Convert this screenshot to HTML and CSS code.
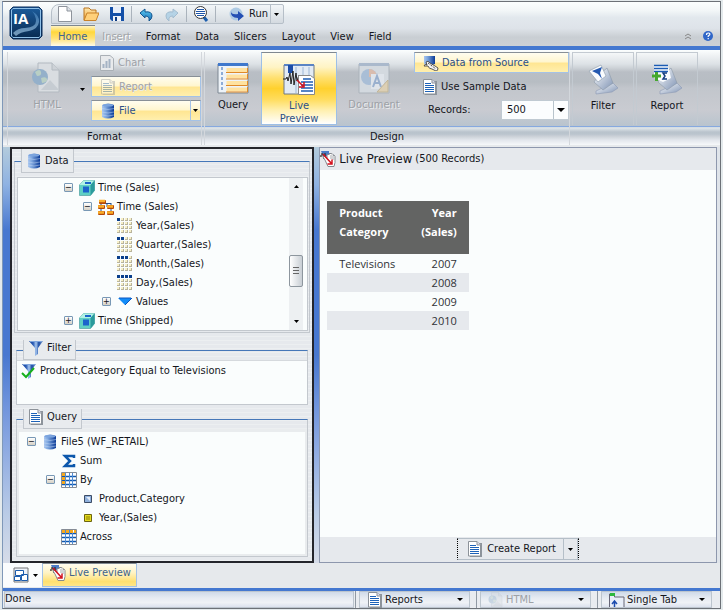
FILE: index.html
```html
<!DOCTYPE html>
<html lang="en">
<head>
    <meta charset="UTF-8">
    <meta name="viewport" content="width=device-width, initial-scale=1.0">
    <title>InfoAssist</title>
    <link rel="stylesheet" href="styles.css">
</head>
<body>
    <!-- Shared icons -->
    <svg class="sprite" aria-hidden="true">
        <defs>
            <linearGradient id="gDb"><stop offset="0" stop-color="#a9c6ee"/><stop offset=".3" stop-color="#7fa8e0"/><stop offset="1" stop-color="#0a3a96"/></linearGradient>
            <linearGradient id="gFunnel"><stop offset="0" stop-color="#12409c"/><stop offset=".3" stop-color="#2a5cb4"/><stop offset=".5" stop-color="#a8c8f0"/><stop offset=".7" stop-color="#1c4ca4"/><stop offset="1" stop-color="#7a9ccc"/></linearGradient>
            <linearGradient id="gLogo" x2="0" y2="1"><stop offset="0" stop-color="#1c5c9c"/><stop offset="1" stop-color="#08294f"/></linearGradient>
            <linearGradient id="gWave" x2="0" y2="1"><stop offset="0" stop-color="#3c7cb8"/><stop offset="1" stop-color="#9cc0dc"/></linearGradient>
            <linearGradient id="gWand" x2="1" y2="1"><stop offset="0" stop-color="#fdfefe"/><stop offset="1" stop-color="#7f93b4"/></linearGradient>
            <linearGradient id="gFolder" x2="0" y2="1"><stop offset="0" stop-color="#ffe9b0"/><stop offset="1" stop-color="#f0a030"/></linearGradient>
            <linearGradient id="gArrow" x2="0" y2="1"><stop offset="0" stop-color="#5fd0f4"/><stop offset="1" stop-color="#1769b4"/></linearGradient>
        </defs>
        <symbol id="db" viewBox="0 0 16 16">
            <path d="M2 2q6-3 12 0v12q-6 3-12 0z" fill="url(#gDb)"/>
            <path d="M2 5.500q6 2 12 0M2 9q6 2 12 0M2 12q6 2 12 0" fill="none" stroke="#c5d8f4" stroke-width=".5"/>
            <ellipse cx="8" cy="2.300" rx="5.500" ry="1.200" fill="#7ba4de"/>
        </symbol>
        <symbol id="doc" viewBox="0 0 16 16">
            <path d="M3 2h12v14H3z" fill="#8d949c"/>
            <path d="M1.500.5h8.500l3.500 3.500v11h-12z" fill="#fff" stroke="#8c9299"/>
            <path d="M10 .5V4h3.500" fill="#dde" stroke="#8c9299"/>
            <path d="M3 4.500h6M3 6.500h9M3 8.500h9M3 10.500h9M3 12.500h9" stroke="#1d62b8"/>
        </symbol>
        <symbol id="cube" viewBox="0 0 16 16">
            <path d="M.5 5l4-4.500h11v10l-4 5H.5z" fill="#5fd0c4" stroke="#5aa8a8" stroke-width=".8"/>
            <path d="M.5 5l4-4.500h11l-4 4.500z" fill="#b0f2e4"/>
            <path d="M11.500 5l4-4.500v10l-4 5z" fill="#2a9a9c"/>
            <path d="M4 6.500h6v6H4z" fill="#1b64cc"/><path d="M6 3h6" stroke="#1b64cc" stroke-width="2"/>
        </symbol>
        <symbol id="hier" viewBox="0 0 16 16">
            <path d="M5 4.500h8M9 4v4M13 4v9M3 4v10" fill="none" stroke="#27508c"/>
            <g fill="#b5480a"><rect x="1" y="1" width="7" height="4" rx="1"/><rect x="0" y="6" width="7" height="4" rx="1"/><rect x="9" y="6" width="7" height="4" rx="1"/><rect x="0" y="12" width="7" height="4" rx="1"/><rect x="9" y="12" width="7" height="4" rx="1"/></g>
            <path d="M1 2h6M0 7.500h6M9 7.500h6M0 13.500h6M9 13.500h6" stroke="#fbb02a" stroke-width="2.500"/>
        </symbol>
        <symbol id="dots" viewBox="0 0 16 16">
            <path d="M0 1.500h16M0 5.500h16M0 9.500h16M0 13.500h16" stroke="#b9b49c" stroke-width="3" stroke-dasharray="3 1"/>
            <path d="M0 1h16M0 5h16M0 9h16M0 13h16" stroke="#f7f0c8" stroke-width="2" stroke-dasharray="2 2"/>
        </symbol>
        <symbol id="down" viewBox="0 0 16 16"><path d="M1 4h14l-7 7z" fill="#128cf8"/><path d="M2 4h12M15 4l-7 7" stroke="#0b57c0" fill="none"/></symbol>
        <symbol id="funnel" viewBox="0 0 16 16">
            <path d="M1 1h14l-5 7v6l-3 2V8z" fill="url(#gFunnel)"/><path d="M2 1.500h12" stroke="#7fa5dc"/>
        </symbol>
        <symbol id="sigma" viewBox="0 0 16 16"><path d="M13 5V3H4l5 5-5 5h9v-2" fill="none" stroke="#0d58ac" stroke-width="2.500"/></symbol>
        <symbol id="grid" viewBox="0 0 16 16">
            <path d="M.5.5h15v15H.5z" fill="#fff" stroke="#858c96"/>
            <path d="M1 4.500h14M1 8.500h14M1 12.500h14" stroke="#0d57b0" stroke-width="1.500"/><path d="M4.500 1v14M8.500 1v14M11.500 1v14" stroke="#4f8cd4"/>
        </symbol>
        <symbol id="hand" viewBox="0 0 16 16">
            <path d="M1 0h8v5H3z" fill="#4b7cc8"/><path d="M0 4l1 2 1-4 2 6 1-6 1 5" fill="none" stroke="#333" stroke-width=".8"/>
            <path d="M5 9L3 6l1-1 3 2V4l1-1 1 1V3l1-1 1 1 1-.5 1 1v1l1-.5 1 1.500v6l-1 4H8z" fill="#fff" stroke="#84898f"/>
            <path d="M11 4v4M13 5v4" stroke="#8d9298" stroke-width=".8"/>
            <path d="M3 3l8.500 9.500M12 8.500V13H7.500" stroke="#d3121f" stroke-width="1.500" fill="none"/>
        </symbol>
        <symbol id="globe" viewBox="0 0 32 32">
            <path d="M7 1h14l7 7v22H7z" fill="#d9dde1" stroke="#b3bac1"/><path d="M21 1v7h7" fill="#cdd2d7" stroke="#b3bac1"/>
            <path d="M10 28l9-10 9 10z" fill="#c6ccd2"/>
            <circle cx="9" cy="15" r="8" fill="#94b0ca"/><path d="M4 10q5-4 6 0t-4 4zM10 16q5-2 6 1t-5 4z" fill="#b9cfc4"/>
        </symbol>
        <symbol id="caret" viewBox="0 0 5 3"><path d="M0 0h5L2.500 3z" fill="currentColor"/></symbol>
    </svg>

    <div class="app">
        <header class="top">
            <svg class="logo" viewBox="0 0 34 34" role="img" aria-label="InfoAssist">
                <path d="M4 1h26l3 3v26l-3 3H4l-3-3V4z" fill="url(#gLogo)" stroke="#0b2f5c"/>
                <path d="M4 2.500h26l1.500 1.500v26L30 31.500H4L2.500 30V4z" fill="none" stroke="#8fc0e8"/>
                <path d="M23 5q8 5 7 11-1 7-10 9-9 1-13 5l-3-3q5-5 12-5 11-1 11-7 0-5-4-10z" fill="url(#gWave)" opacity=".75"/>
                <text x="4" y="18" class="logo-text">IA</text>
            </svg>
            <div class="top-main">
                <div class="quick">
                    <button aria-label="New"><svg viewBox="0 0 16 16"><path d="M1.500.5H10L14.500 5v10.500h-13z" fill="#fff" stroke="#8d939b"/><path d="M10 .5V5h4.500" fill="#dde3ea" stroke="#8d939b"/></svg></button>
                    <button aria-label="Open"><svg viewBox="0 0 16 16"><path d="M1 14V2h5l2 2h5v3" fill="url(#gFolder)" stroke="#b87420"/><path d="M1 14.500L4 7h12l-3 7.500z" fill="#ffd07a" stroke="#c8822a"/></svg></button>
                    <button aria-label="Save"><svg viewBox="0 0 16 16"><path d="M1 1h14v14H3l-2-2z" fill="#1450a8"/><path d="M4 1h8v6H4z" fill="#e6eefa"/><path d="M4 10h8v5H4z" fill="#f0f4fa"/><path d="M6 11h2v4H6z" fill="#103c80"/></svg></button>
                    <span class="sep"></span>
                    <button aria-label="Undo"><svg viewBox="0 0 16 16"><path d="M2 7l5-4v3q7-1 7 4 0 3-3 5 1-5-4-5v2z" fill="url(#gArrow)" stroke="#12558f"/></svg></button>
                    <button aria-label="Redo" disabled><svg viewBox="0 0 16 16"><path d="M14 7L9 3v3q-7-1-7 4 0 3 3 5-1-5 4-5v2z" fill="#b5d3e6" stroke="#a3bccf"/></svg></button>
                    <span class="sep"></span>
                    <button aria-label="View query"><svg viewBox="0 0 16 16"><path d="M10 10l4 5" stroke="#1c5fae" stroke-width="3"/><circle cx="7.500" cy="6.500" r="6" fill="#fff" stroke="#333"/><path d="M4 3.500h7M3 5.500h9M3 7.500h9M4 9.500h7" stroke="#1d55a8"/></svg></button>
                    <span class="sep"></span>
                    <button class="run"><svg viewBox="0 0 16 16"><circle cx="7" cy="8" r="6.500" fill="#aecbe4"/><path d="M2 5q0 4 7 3V5l6 5-6 5v-3q-8 0-7-7z" fill="#2450b4"/></svg>Run</button>
                    <button class="split" aria-label="Run options"><svg class="caret"><use href="#caret"/></svg></button>
                </div>
                <nav class="menu">
                    <a href="#" class="active">Home</a>
                    <a href="#" class="off">Insert</a>
                    <a href="#">Format</a>
                    <a href="#">Data</a>
                    <a href="#">Slicers</a>
                    <a href="#">Layout</a>
                    <a href="#">View</a>
                    <a href="#">Field</a>
                </nav>
            </div>
            <div class="help">
                <button aria-label="Collapse ribbon"><svg viewBox="0 0 10 10"><path d="M2 5l3-2 3 2M2 8l3-2 3 2" fill="none" stroke="#888"/></svg></button>
                <button aria-label="Help"><svg viewBox="0 0 10 10"><circle cx="5" cy="5" r="5" fill="#2f66c8"/><path d="M3.500 4q0-2 1.800-2t1.500 1.700L5.200 5v1M5.200 7v1.300" fill="none" stroke="#fff" stroke-width="1.200"/></svg></button>
            </div>
        </header>

        <div class="ribbon">
            <section class="group format">
                <div class="group-body">
                    <button class="big wide" disabled><svg><use href="#globe"/></svg>HTML</button>
                    <button class="drop" aria-label="Output format"><svg class="caret"><use href="#caret"/></svg></button>
                    <div class="stack">
                        <button class="item" disabled><svg viewBox="0 0 16 16"><path d="M1.500.5H11l3.500 3v12h-13z" fill="#e8eaec" stroke="#aab0b6"/><path d="M4.500 13V9M7.500 13V6M10.500 13V4" stroke="#a5b3c4" stroke-width="2"/></svg>Chart</button>
                        <button class="item lit" disabled><svg class="faded"><use href="#doc"/></svg>Report</button>
                        <div class="pair">
                            <button class="item lit"><svg><use href="#db"/></svg>File</button>
                            <button class="lit" aria-label="File options"><svg class="caret"><use href="#caret"/></svg></button>
                        </div>
                    </div>
                </div>
                <h2>Format</h2>
            </section>
            <section class="group design">
                <div class="group-body">
                    <button class="big"><svg viewBox="0 0 32 32"><path d="M1 2h30v29H1z" fill="#eef3f8" stroke="#7d8792"/><path d="M1 1h30v3H1z" fill="#3f78cc"/><path d="M5 5v25" stroke="#2d66b8" stroke-dasharray="3 2"/><path d="M9.500 6h21v4h-21zM9.500 12.500h21v4h-21zM9.500 19h21v4h-21zM9.500 25.500h21v4h-21z" fill="#ffe2a0"/><path d="M9 10.500h21.500V6M9 17h21.500v-5M9 23.500h21.500V19M9 30h21.500v-5" fill="none" stroke="#e08a28"/></svg>Query</button>
                    <button class="big live"><svg viewBox="0 0 32 32"><path d="M1 2h30v29H1z" fill="#e3ebf4" stroke="#6e7883"/><path d="M1 1h30v2H1z" fill="#5a84c4"/><path d="M5 2h5v8H5z" fill="#1d4ea8"/><path d="M13 4v26M20 4v26M26 4v26" stroke="#9db7d8"/><path d="M0 16h3l1-2 1 4 2-8 1 11 2-13 1 14 2-12 1 8 2-6 1 4" fill="none" stroke="#222"/><path d="M15.500 12.500h12l4 3v16h-16z" fill="#fff" stroke="#888"/><path d="M20 16h8M18 19h12M18 22h12M18 25h12M18 28h12" stroke="#1c5cb4" stroke-width="1.500"/><path d="M14 17l6 6M21 19v5h-5" stroke="#d0101c" stroke-width="1.500" fill="none"/></svg>Live<br>Preview</button>
                    <button class="big wide" disabled><svg viewBox="0 0 32 32"><path d="M1 2h30v29H1z" fill="#d3d9df" stroke="#abb3bb"/><path d="M1 1h30v3H1z" fill="#aab9cc"/><circle cx="11" cy="15" r="8" fill="#a9bed6"/><path d="M11 15V7a8 8 0 0 1 8 8z" fill="#d9bcae"/><path d="M13 27V12h13v15z" fill="#dfe4ea"/><path d="M15 25l4-11 4 11M17 21h5" fill="none" stroke="#9ab0ce" stroke-width="2"/><path d="M19 30L30 18v12z" fill="#dccfb4" stroke="#c0b498"/></svg>Document</button>
                    <div class="stack source">
                        <button class="item lit"><svg viewBox="0 0 16 16"><path d="M1 1h11v8q-5 2-11 0z" fill="url(#gDb)"/><path d="M1 11q1-3 3-1l-1-3q2-2 4 1l5 3 3 2q0 3-2 3l-4-2q-3 0-4-3z" fill="#f4f4f4" stroke="#333" stroke-width=".8"/><path d="M5 8l8 6" stroke="#222" stroke-dasharray="1 1"/></svg>Data from Source</button>
                        <button class="item"><svg><use href="#doc"/></svg>Use Sample Data</button>
                        <div class="records">
                            <label for="records">Records:</label>
                            <span class="combo"><select id="records"><option>500</option><option>1000</option></select></span>
                        </div>
                    </div>
                </div>
                <h2>Design</h2>
            </section>
            <section class="group single">
                <button class="big"><svg viewBox="0 0 32 32"><path d="M9 28l17-8 5 5-6 4-16 2z" fill="url(#gWand)" stroke="#8b99b3" stroke-width=".6"/><path d="M12 12l8-7 6 15-10 7-9-8z" fill="url(#gWand)" stroke="#8b99a8" stroke-width=".6"/><path d="M2 8l12-6 5 11-8 6z" fill="#fafcfe" stroke="#8a98a8" stroke-width=".6"/><path d="M5 8l10-4-2 6 2 6-4-5z" fill="#2458b0"/></svg>Filter</button>
            </section>
            <section class="group single">
                <button class="big"><svg viewBox="0 0 32 32"><path d="M9 28l17-8 5 5-6 4-16 2z" fill="url(#gWand)" stroke="#8b99b3" stroke-width=".6"/><path d="M12 12l8-7 6 15-10 7-9-8z" fill="url(#gWand)" stroke="#8b99a8" stroke-width=".6"/><path d="M3 2h14l3 13-8 4-9-4z" fill="#fafcfe"/><path d="M3 2.500h14M3 5.500h14M3 8.500h14" stroke="#1c5cb4" stroke-width="1.500"/><path d="M1 13h9M5.500 9v9" stroke="#46a82e" stroke-width="3"/><path d="M16 10h-4l2 3-2 3h4" fill="none" stroke="#123c80" stroke-width="1.500"/></svg>Report</button>
            </section>
        </div>

        <main class="workspace">
            <div class="side">
                <fieldset class="pane data-pane">
                    <legend><svg><use href="#db"/></svg>Data</legend>
                    <div class="tree-box">
                        <ul class="tree data-tree">
                            <li><div class="row"><button class="toggle" aria-label="Collapse">−</button><svg><use href="#cube"/></svg>Time (Sales)</div>
                                <ul>
                                    <li><div class="row"><button class="toggle" aria-label="Collapse">−</button><svg><use href="#hier"/></svg>Time (Sales)</div>
                                        <ul>
                                            <li><div class="row leaf"><svg viewBox="0 0 16 16"><use href="#dots"/><path d="M0 1.500h3" stroke="#0a3f8c" stroke-width="3"/></svg>Year,(Sales)</div></li>
                                            <li><div class="row leaf"><svg viewBox="0 0 16 16"><use href="#dots"/><path d="M0 1.500h7" stroke="#0a3f8c" stroke-width="3" stroke-dasharray="3 1"/></svg>Quarter,(Sales)</div></li>
                                            <li><div class="row leaf"><svg viewBox="0 0 16 16"><use href="#dots"/><path d="M0 1.500h11" stroke="#0a3f8c" stroke-width="3" stroke-dasharray="3 1"/></svg>Month,(Sales)</div></li>
                                            <li><div class="row leaf"><svg viewBox="0 0 16 16"><use href="#dots"/><path d="M0 1.500h15" stroke="#0a3f8c" stroke-width="3" stroke-dasharray="3 1"/></svg>Day,(Sales)</div></li>
                                            <li><div class="row"><button class="toggle" aria-label="Expand">+</button><svg><use href="#down"/></svg>Values</div></li>
                                        </ul>
                                    </li>
                                </ul>
                            </li>
                            <li><div class="row"><button class="toggle" aria-label="Expand">+</button><svg><use href="#cube"/></svg>Time (Shipped)</div></li>
                        </ul>
                        <div class="scrollbar">
                            <svg class="caret flip"><use href="#caret"/></svg>
                            <span class="thumb"></span>
                            <svg class="caret"><use href="#caret"/></svg>
                        </div>
                    </div>
                </fieldset>

                <fieldset class="pane filter-pane">
                    <legend><svg><use href="#funnel"/></svg>Filter</legend>
                    <div class="filter-box">
                        <div class="filter-row"><svg viewBox="0 0 16 16"><use href="#funnel"/><path d="M1 10l4 4 8-9" fill="none" stroke="#16b01c" stroke-width="2"/></svg>Product,Category Equal to Televisions</div>
                    </div>
                </fieldset>

                <fieldset class="pane query-pane">
                    <legend><svg><use href="#doc"/></svg>Query</legend>
                    <div class="query-box">
                        <ul class="tree">
                            <li><div class="row"><button class="toggle" aria-label="Collapse">−</button><svg><use href="#db"/></svg>File5 (WF_RETAIL)</div>
                                <ul>
                                    <li><div class="row leaf"><svg><use href="#sigma"/></svg>Sum</div></li>
                                    <li><div class="row"><button class="toggle" aria-label="Collapse">−</button><svg viewBox="0 0 16 16"><use href="#grid"/><path d="M1 2.500h3M1 6.500h3M1 10.500h3" stroke="#f7a81c" stroke-width="3"/></svg>By</div>
                                        <ul>
                                            <li><div class="row leaf"><svg viewBox="0 0 16 16"><path d="M4.500 4.500h7v7h-7z" fill="#8fb0dc" stroke="#3c4c66"/><path d="M6 6h4v4z" fill="#e2ecfa"/></svg>Product,Category</div></li>
                                            <li><div class="row leaf"><svg viewBox="0 0 16 16"><path d="M4.500 4.500h7v7h-7z" fill="#e6dc20" stroke="#6c6410"/><path d="M6 6h4v4H6z" fill="#b8ac10"/></svg>Year,(Sales)</div></li>
                                        </ul>
                                    </li>
                                    <li><div class="row leaf"><svg viewBox="0 0 16 16"><use href="#grid"/><path d="M1 2.500h14" stroke="#f7a81c" stroke-width="3" stroke-dasharray="3 1"/></svg>Across</div></li>
                                </ul>
                            </li>
                        </ul>
                    </div>
                </fieldset>
            </div>

            <section class="preview">
                <h1><svg><use href="#hand"/></svg>Live Preview <small>(500 Records)</small></h1>
                <div class="canvas">
                    <table>
                        <thead>
                            <tr><th>Product<br>Category</th><th>Year<br>(Sales)</th></tr>
                        </thead>
                        <tbody>
                            <tr><td>Televisions</td><td>2007</td></tr>
                            <tr><td></td><td>2008</td></tr>
                            <tr><td></td><td>2009</td></tr>
                            <tr><td></td><td>2010</td></tr>
                        </tbody>
                    </table>
                </div>
                <div class="actions">
                    <div class="create">
                        <button><svg><use href="#doc"/></svg>Create Report</button>
                        <button class="split" aria-label="Report options"><svg class="caret"><use href="#caret"/></svg></button>
                    </div>
                </div>
            </section>
        </main>

        <div class="tabs">
            <button class="windows" aria-label="Switch window"><svg viewBox="0 0 16 16"><path d="M1 1h14v14H1z" fill="#eef3fa" stroke="#777"/><g fill="#fff" stroke="#1c5cac"><path d="M2.500 3.500h8v5h-8zM1.500 9.500h6v4h-6zM8.500 7.500h6v6h-6z"/></g></svg><svg class="caret"><use href="#caret"/></svg></button>
            <button class="tab"><svg><use href="#hand"/></svg>Live Preview</button>
        </div>

        <footer class="status">
            <div class="message">Done</div>
            <div class="choice"><svg><use href="#doc"/></svg><select aria-label="Output type"><option>Reports</option></select></div>
            <div class="choice off"><svg class="faded"><use href="#globe"/></svg><select aria-label="Format" disabled><option>HTML</option></select></div>
            <div class="choice"><svg viewBox="0 0 16 16"><path d="M.5 15V2h5v3h9.500v10" fill="#e8eef8" stroke="#667"/><path d="M1 1h5v3H1z" fill="#2cb83c"/><path d="M5.500 15V9M3 12l2.500-3L8 12" stroke="#1c4cae" stroke-width="1.500" fill="none"/></svg><select aria-label="Tab mode"><option>Single Tab</option></select></div>
        </footer>
    </div>
</body>
</html>
```

FILE: styles.css
```css
* {
    box-sizing: border-box;
}
body {
    margin: 0;
    background: #e4eaec;
    color: #14161c;
    font: 11px/16px "DejaVu Sans Condensed", "Noto Sans", sans-serif;
}
button, select {
    font: inherit;
    color: inherit;
    margin: 0;
    padding: 0;
    border: 0;
    background: none;
}
h1, h2, ul {
    margin: 0;
    padding: 0;
    font: inherit;
    list-style: none;
}
svg {
    flex: none;
    width: 16px;
    height: 16px;
}
.sprite {
    position: absolute;
    width: 0;
    height: 0;
}
svg.caret {
    width: 5px;
    height: 3px;
    color: #000;
}
.faded {
    opacity: .4;
}
.app {
    display: flex;
    flex-direction: column;
    min-height: calc(100vh - 2px);
    margin: 1px 2px;
    border: 1px solid #6c7177;
    border-left-color: #7f98b8;
    background: #e6e9ec;
}

/* Header */
.top {
    display: flex;
    height: 48px;
    border-bottom: 4px solid #4478d0;
    background: linear-gradient(#fbfefe, #f2f6f7 20%, #e2e8ed 35%, #dee3e9 60%, #c9ced3 80%, #cdd1d5);
}
.logo {
    width: 34px;
    height: 34px;
    margin: 4px 8px 0 6px;
}
.logo-text {
    font: bold 15px "Open Sans", sans-serif;
    fill: #fff;
}
.top-main {
    flex: 1;
}
.quick {
    display: flex;
    align-items: center;
    width: max-content;
    height: 20px;
    margin: 2px 0 1px;
    border: 1px solid #b6bfc8;
    border-radius: 8px 2px 2px 0;
    background: linear-gradient(#f2f6f8, #d4dae0);
}
.quick button {
    display: flex;
    align-items: center;
    justify-content: center;
    width: 26px;
    height: 18px;
}
.quick .run {
    width: auto;
    gap: 4px;
    margin-left: 12px;
}
.quick .split {
    width: 13px;
    margin-left: 2px;
    border-left: 1px solid #b6bfc8;
}
.sep {
    width: 1px;
    height: 16px;
    margin: 0 1px;
    background: #aab3bc;
}
.menu {
    display: flex;
}
.menu a {
    height: 21px;
    padding: 2px 8px 0 7px;
    color: #14161c;
    line-height: 19px;
    text-decoration: none;
}
.menu .active {
    border-top: 1px solid #7d868e;
    padding-top: 1px;
    background: linear-gradient(#fff3c4, #ffd83c 30%, #ffe070 60%, #fffbe8);
    color: #40638c;
}
.menu .off {
    color: #a2a5a9;
    text-shadow: 1px 1px 0 #fff;
}
.help {
    display: flex;
    align-items: flex-end;
    gap: 10px;
    padding: 0 7px 5px;
}
.help button, .help svg {
    display: block;
    width: 10px;
    height: 10px;
}

/* Ribbon */
.ribbon {
    display: flex;
    height: 95px;
    gap: 2px;
    padding: 2px 4px 0;
    background:
        linear-gradient(#86a9e0, #86a9e0) 0 76px / 100% 1px no-repeat,
        linear-gradient(#fbfefe, #eef1f3 6px, #dde2e6 14px, #cdd2d7 18px, #b9bec5 22px, #b7bdc3 32px, #c2c6cc 38px, #c9cbd1 60px, #b9c4ce 76px, #dfe6ea 78px, #b9c3cc 82px, #bac4cd 84px, #c9cfd6 86px, #e2e6ec 90px, #f6f8fa);
}
.group {
    border: 1px solid #d3d7dc;
    border-width: 0 1px;
}
.group h2 {
    height: 17px;
    padding-top: 2px;
    text-align: center;
}
.group-body {
    display: flex;
    height: 75px;
}
.single {
    height: 73px;
    border-top-width: 1px;
    border-color: #c3cad1;
}
.big {
    display: flex;
    flex-direction: column;
    align-items: center;
    width: 60px;
    height: 73px;
    padding-top: 10px;
    line-height: 13px;
}
.big.wide {
    width: 74px;
}
.big svg {
    width: 32px;
    height: 32px;
    margin-bottom: 4px;
}
.format .big {
    width: 72px;
    padding-left: 6px;
}
.design .big {
    min-width: 56px;
}
.design .big:first-child {
    width: 56px;
}
button:disabled {
    color: #9da1a6;
    text-shadow: 1px 1px 0 #e8ebee;
}
.design .live {
    width: 76px;
    border: 1px solid #9dbfe6;
    border-top-color: #808890;
    background: linear-gradient(#fffdf0, #fff4c4 20%, #ffe070 35%, #ffd12e 50%, #ffdc5c 65%, #ffefac 80%, #fff);
    color: #2c5088;
}
.drop {
    display: flex;
    align-items: center;
    width: 8px;
}
.stack {
    display: flex;
    flex-direction: column;
    gap: 3px;
    flex: 1;
    min-width: 110px;
    margin-left: 3px;
}
.source {
    min-width: 155px;
}
.item {
    display: flex;
    align-items: center;
    gap: 3px;
    height: 21px;
    padding-left: 8px;
}
.lit {
    border: 1px solid #a4c2e6;
    border-top-color: #888f96;
    background: linear-gradient(#fffdf0, #fff6d0 45%, #ffe693 55%, #ffefae);
}
.lit:enabled {
    color: #2c5088;
}
.pair {
    display: flex;
}
.pair .item {
    flex: 1;
}
.pair .lit + .lit {
    display: flex;
    align-items: center;
    padding: 0 2px;
    border-left: 0;
}
.records {
    display: flex;
    align-items: center;
    justify-content: space-between;
    padding-left: 14px;
}
.combo {
    position: relative;
    width: 68px;
    height: 20px;
    border: 1px solid #c0cad2;
    background: #fbfdfe;
}
.combo select {
    width: 100%;
    height: 18px;
    padding-left: 5px;
    appearance: none;
}
.combo::after {
    content: "";
    position: absolute;
    right: 3px;
    top: 7px;
    border: 4px solid transparent;
    border-top-color: #000;
    border-bottom: 0;
    pointer-events: none;
}
.combo::before {
    content: "";
    position: absolute;
    right: 14px;
    top: 0;
    bottom: 0;
    width: 1px;
    background: #b8c4cc;
}

/* Workspace */
.workspace {
    flex: 1;
    display: grid;
    grid-template-columns: 13fr 17fr;
    gap: 5px;
    padding: 0 3px 0 7px;
    border-top: 2px solid #e6e9ec;
    background: linear-gradient(90deg, transparent 60%, #dfe4ea 99%), linear-gradient(#b3cbdc, #8fb2e2 9%, #4878d0 20%, #4878d0 50%, #6f94dc 62%, #92ade2 74%, #b9cbe6 88%, #d6dce8);
}
.side {
    display: flex;
    flex-direction: column;
    gap: 4px;
    border: 2px solid #24252b;
    background: repeating-linear-gradient(#e6e9ed 0 3px, #eceff1 3px 4px);
}
.pane {
    min-width: 0;
    margin: 0 4px;
    padding: 0;
    border: 1px solid #c3c8ce;
    border-top-color: #4577b8;
}
.pane legend {
    display: flex;
    align-items: center;
    gap: 3px;
    height: 20px;
    margin-left: 6px;
    padding: 0 4px 3px;
    border: 1px solid #c3c8ce;
    border-top: 0;
    background: #e8ebee;
}
.data-pane {
    margin: 0 2px 3px;
}
.data-pane legend {
    height: 24px;
    padding-bottom: 0;
}
.tree-box {
    display: flex;
    margin: 4px 1px 1px 2px;
    border: 1px solid #c3c8ce;
    background: #fafdfd;
}
.tree {
    flex: 1;
    padding-left: 8px;
}
.data-tree {
    padding-left: 46px;
}
.tree ul {
    padding-left: 19px;
}
.row {
    display: flex;
    align-items: center;
    gap: 3px;
    height: 19px;
    white-space: nowrap;
}
.row.leaf {
    padding-left: 15px;
}
.toggle {
    width: 9px;
    height: 9px;
    margin-right: 3px;
    border: 1px solid #7898b5;
    border-radius: 1px;
    background: linear-gradient(#fff, #d5d0c4);
    font-size: 9px;
    line-height: 7px;
}
.scrollbar {
    display: flex;
    flex-direction: column;
    align-items: center;
    justify-content: space-between;
    width: 14px;
    margin-right: 4px;
    padding: 7px 0;
    background: #edf0f2;
}
.flip {
    transform: rotate(180deg);
}
.thumb {
    width: 14px;
    height: 32px;
    margin-top: 34px;
    border: 1px solid #8d969e;
    border-radius: 2px;
    background:
        repeating-linear-gradient(#666 0 1px, transparent 1px 3px) center / 6px 8px no-repeat,
        linear-gradient(90deg, #fff, #c8ced4);
}
.filter-box {
    height: 44px;
    border-top: 1px solid #d5d9dd;
    background: #fafdfd;
}
.filter-row {
    display: flex;
    align-items: center;
    gap: 3px;
    padding: 1px 4px;
    height: 19px;
}
.query-pane {
    flex: 1;
    display: flex;
    margin-bottom: 4px;
}
.query-box {
    height: 100%;
    flex: 1;
    border: 2px solid #e9ecee;
    border-top-width: 3px;
    background: #fafdfd;
}

/* Live preview */
.preview {
    display: flex;
    flex-direction: column;
    border: 1px solid #8d97ad;
    background: #fafdfd;
}
.preview h1 {
    display: flex;
    align-items: center;
    gap: 3px;
    height: 22px;
    background: #e6e9ed;
    font-size: 13px;
}
.preview small {
    font-size: 11px;
}
.canvas {
    flex: 1;
    padding: 31px 7px;
}
table {
    border-collapse: collapse;
    font: 11px/19px "Open Sans", "Noto Sans", sans-serif;
    color: #303236;
}
th {
    height: 53px;
    padding: 2px 12px 0;
    background: #636463;
    color: #fff;
    text-align: left;
    vertical-align: top;
}
td {
    height: 19px;
    padding: 0 12px;
}
th:last-child, td:last-child {
    padding-left: 14px;
    text-align: right;
}
tbody tr:nth-child(even) {
    background: #e6e9ed;
}
.actions {
    display: flex;
    justify-content: center;
    height: 25px;
    padding-top: 1px;
    background: #e6e9ed;
}
.create {
    display: flex;
    height: 22px;
    border: 1px solid #b5bfc8;
    border-left: 1px dotted #000;
    border-right: 1px dotted #000;
}
.create button {
    display: flex;
    align-items: center;
    gap: 4px;
    padding: 0 7px 0 9px;
}
.create .split {
    padding: 0 4px;
    border: 1px solid #b5bfc8;
    border-width: 0 1px;
}

/* Window tabs and status bar */
.tabs {
    display: flex;
    height: 25px;
    border-bottom: 1px solid #e6e9ec;
}
.windows {
    display: flex;
    align-items: center;
    gap: 4px;
    padding: 0 4px 0 10px;
    background: #fafcfd;
}
.tab {
    display: flex;
    gap: 3px;
    padding: 1px 5px 0 7px;
    border: 1px solid #a4c2e6;
    border-top-color: #808890;
    background: linear-gradient(#fffdf0, #fff3c4 40%, #ffe070 80%, #ffe68a);
    color: #40638c;
}
.status {
    display: flex;
    gap: 2px;
    height: 20px;
    border-top: 3px solid #4478d0;
    background: #e9ecf0;
}
.message, .choice {
    border: 1px solid #bcc5ce;
    background: linear-gradient(#cfdae9, #e6ebf2 40%, #eff2f6 70%, #dce2ee);
}
.message {
    flex: 1;
    margin: 0 3px 0 1px;
    line-height: 14px;
}
.choice {
    display: flex;
    align-items: center;
    position: relative;
    gap: 2px;
    width: 111px;
    margin-right: 8px;
    padding-left: 7px;
    box-shadow: -3px 0 0 #e9ecf0, -4px 0 0 #9099a3;
}
.choice select {
    flex: 1;
    min-width: 0;
    appearance: none;
    opacity: 1;
}
.choice::after {
    content: "";
    position: absolute;
    right: 6px;
    top: 6px;
    border: 3px solid transparent;
    border-top-color: #000;
    border-bottom: 0;
    pointer-events: none;
}
.choice.off {
    color: #9da1a6;
}
```
